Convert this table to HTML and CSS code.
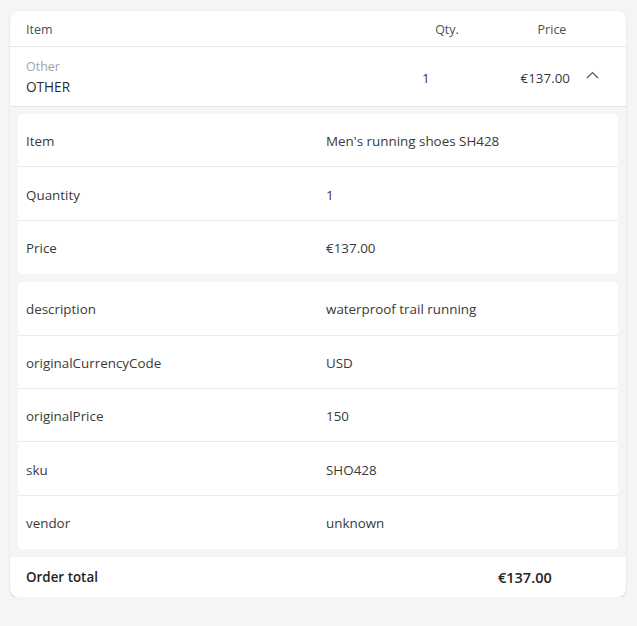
FILE: index.html
```html
<!DOCTYPE html>
<html lang="en">
<head>
<meta charset="utf-8">
<title>Order</title>
<link rel="stylesheet" href="styles.css">
</head>
<body>
<div class="card">
  <div class="head">
    <div class="h-item">Item</div>
    <div class="h-qty">Qty.</div>
    <div class="h-price">Price</div>
    <div></div>
  </div>
  <div class="line">
    <div class="l-item">
      <div class="l-cat">Other</div>
      <div class="l-name">OTHER</div>
    </div>
    <div class="l-qty">1</div>
    <div class="l-price">€137.00</div>
    <div></div>
    <div class="l-chev">
      <svg width="13" height="8" viewBox="0 0 13 8"><path d="M1 7 L6.5 1.5 L12 7" fill="none" stroke="#555" stroke-width="1.2"/></svg>
    </div>
    <div></div>
  </div>
  <div class="details">
    <div class="box">
      <div class="row"><div class="k">Item</div><div class="v">Men's running shoes SH428</div></div>
      <div class="row"><div class="k">Quantity</div><div class="v">1</div></div>
      <div class="row"><div class="k">Price</div><div class="v">€137.00</div></div>
    </div>
    <div class="box">
      <div class="row"><div class="k">description</div><div class="v">waterproof trail running</div></div>
      <div class="row"><div class="k">originalCurrencyCode</div><div class="v">USD</div></div>
      <div class="row"><div class="k">originalPrice</div><div class="v">150</div></div>
      <div class="row"><div class="k">sku</div><div class="v">SHO428</div></div>
      <div class="row"><div class="k">vendor</div><div class="v">unknown</div></div>
    </div>
  </div>
  <div class="total">
    <div class="t-label">Order total</div>
    <div class="t-value">€137.00</div>
  </div>
</div>
</body>
</html>
```
FILE: styles.css
```css
* { box-sizing: border-box; }
html, body { margin: 0; }
body {
  background: #f5f5f5;
  padding: 11px 11px 0 10px;
  font-family: "Open Sans", "Noto Sans", sans-serif;
  font-size: 13.4px;
  color: #3b3a39;
}
.card {
  width: 616px;
  background: #fff;
  border-radius: 8px;
  box-shadow: 0 1px 2px rgba(0,0,0,0.14), 0 0 1px rgba(0,0,0,0.08);
  overflow: hidden;
}
.head {
  display: grid;
  grid-template-columns: 1fr 130px 80px 34px;
  height: 36px;
  align-items: center;
  border-bottom: 1px solid #e6e6e6;
  padding-left: 16px;
  padding-top: 1px;
  font-size: 12.5px;
  color: #505050;
}
.h-qty, .h-price { text-align: center; }
.line {
  display: grid;
  grid-template-columns: 1fr 60px 88px 8px 28px 20px;
  height: 60px;
  align-items: center;
  padding-left: 16px;
  padding-top: 2px;
  border-bottom: 1px solid #e6e6e6;
}
.l-cat { color: #a3a3a3; font-size: 12.5px; line-height: 19px; }
.l-name { font-size: 13.6px; line-height: 22px; color: #2b2b2b; }
.l-qty { text-align: left; }
.l-price { text-align: right; }
.l-chev { display: flex; justify-content: center; padding-bottom: 6px; }
.details {
  background: #f5f5f5;
  padding: 7px 8px 8px 8px;
  display: flex;
  flex-direction: column;
  gap: 8px;
}
.box {
  background: #fff;
  border-radius: 4px;
}
.row {
  display: grid;
  grid-template-columns: 1fr 1fr;
  height: 53.4px;
  align-items: center;
  padding-top: 2px;
  border-bottom: 1px solid #ececec;
}
.row:last-child { border-bottom: none; }
.k, .v { padding-left: 8px; }
.total {
  display: flex;
  align-items: center;
  height: 40px;
  padding-left: 16px;
  font-weight: 600;
  color: #242424;
}
.t-label { flex: 1; font-size: 13.4px; }
.t-value { width: 128px; font-size: 14.5px; }
```
